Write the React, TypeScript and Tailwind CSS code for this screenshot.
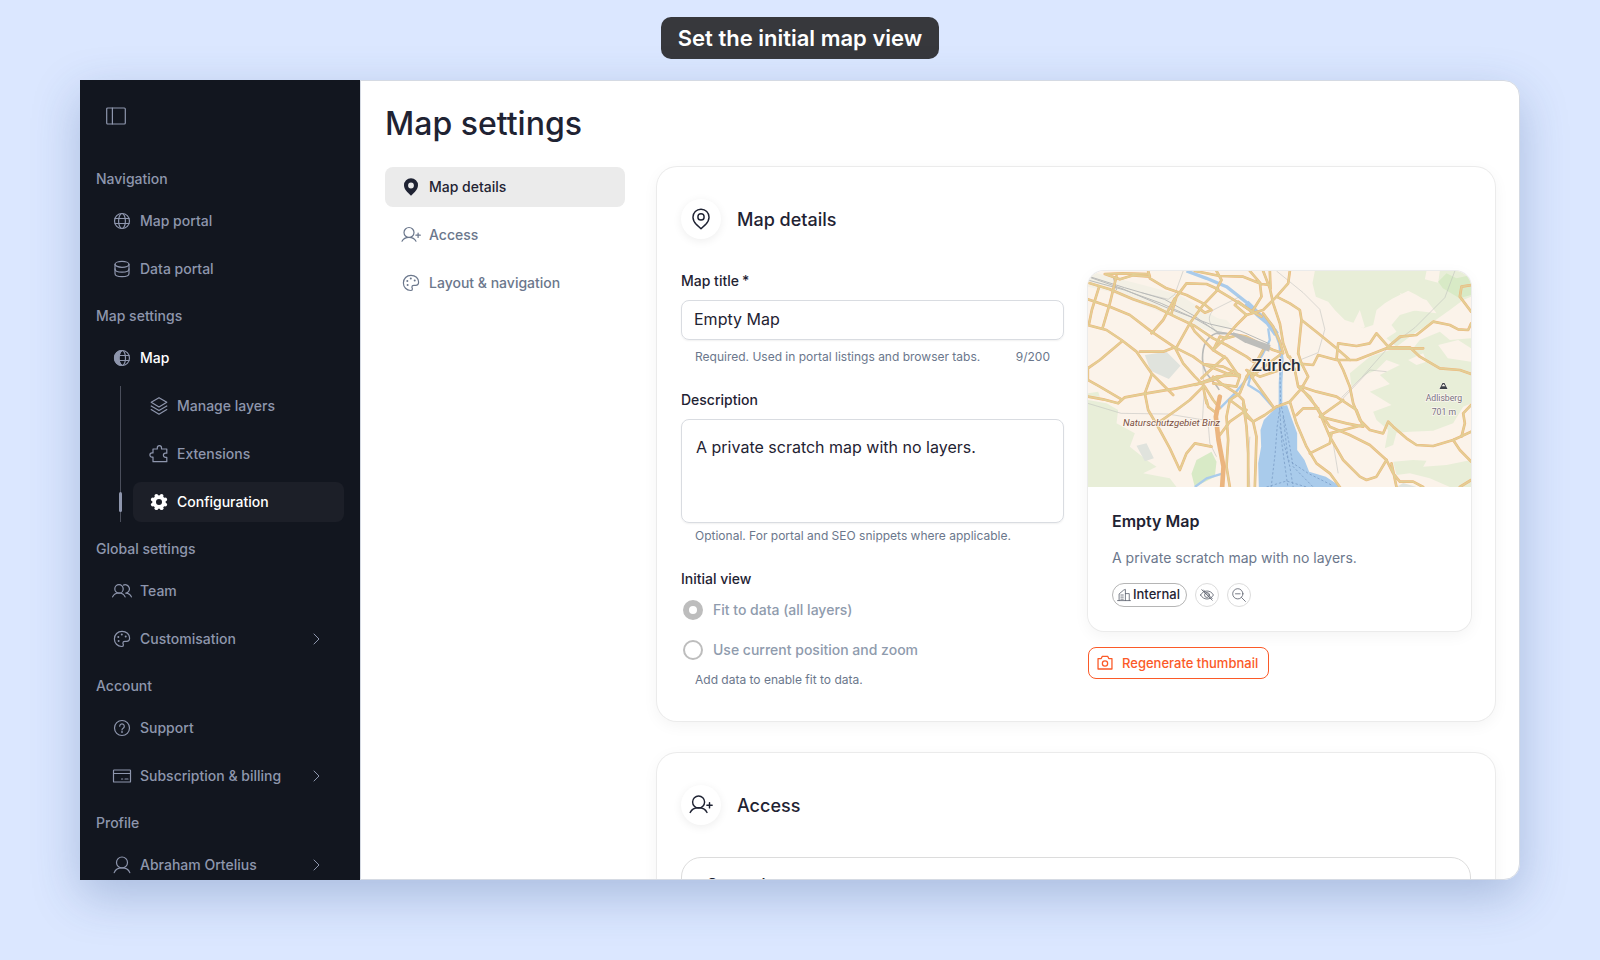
import { useState } from "react"
import type { ReactNode } from "react"

interface IconProps {
  className?: string
}

interface NavItem {
  label: string
  icon: ReactNode
  active?: boolean
  expandable?: boolean
}

function Svg({ className = "size-5", children }: { className?: string; children: ReactNode }) {
  return (
    <svg
      viewBox="0 0 20 20"
      className={`${className} shrink-0`}
      fill="none"
      stroke="currentColor"
      strokeWidth="1.2"
      strokeLinecap="round"
      strokeLinejoin="round"
      aria-hidden="true"
    >
      {children}
    </svg>
  )
}

const SidebarIcon = ({ className }: IconProps) => (
  <Svg className={className}>
    <rect x="0.7" y="2" width="18.6" height="16" rx="1" />
    <path d="M6.4 2v16" />
  </Svg>
)

const GlobeIcon = () => (
  <Svg>
    <circle cx="10" cy="10" r="7.5" />
    <ellipse cx="10" cy="10" rx="3.4" ry="7.5" />
    <path d="M3 7.5h14M3 12.5h14" />
  </Svg>
)

const GlobeHalfIcon = () => (
  <Svg>
    <path d="M10 2.5a7.5 7.5 0 0 0 0 15c-2-1.5-3.3-4.3-3.3-7.5S8 4 10 2.5Z" fill="currentColor" />
    <circle cx="10" cy="10" r="7.5" />
    <ellipse cx="10.3" cy="10" rx="3.2" ry="7.5" />
    <path d="M7 7.5h10M7 12.5h10" />
  </Svg>
)

const DatabaseIcon = () => (
  <Svg>
    <ellipse cx="10" cy="5.3" rx="7" ry="3" />
    <path d="M3 5.3v9.2c0 1.9 3.1 3.2 7 3.2s7-1.3 7-3.2V5.3" />
    <path d="M3 9.9c0 1.9 3.1 3.2 7 3.2s7-1.3 7-3.2" />
  </Svg>
)

const LayersIcon = () => (
  <Svg>
    <path d="m10 1.7 7.8 4.6L10 10.9 2.2 6.3 10 1.7Z" />
    <path d="m2.2 10 7.8 4.6 7.8-4.6M2.2 13.6l7.8 4.6 7.8-4.6" />
  </Svg>
)

const PuzzleIcon = () => (
  <Svg>
    <path d="M4 5h4.3V3.7a2.1 2.1 0 0 1 4.2 0V5h5.3v4.2h-1.3a2.1 2.1 0 0 0 0 4.2h1.3v4.3H4v-4.6H3a2.1 2.1 0 0 1 0-4.2h1V5Z" />
  </Svg>
)

const gearTeeth = [
  [16.2, 12.6],
  [12.6, 16.2],
  [7.4, 16.2],
  [3.8, 12.6],
  [3.8, 7.4],
  [7.4, 3.8],
  [12.6, 3.8],
  [16.2, 7.4],
]

const GearIcon = () => (
  <svg viewBox="0 0 20 20" className="size-5 shrink-0" aria-hidden="true">
    <circle cx="10" cy="10" r="4.9" fill="none" stroke="currentColor" strokeWidth="3.8" />
    {gearTeeth.map(([cx, cy]) => (
      <circle key={`${cx}-${cy}`} cx={cx} cy={cy} r="1.9" fill="currentColor" />
    ))}
  </svg>
)

const UserIcon = () => (
  <Svg>
    <circle cx="10" cy="7.5" r="5.5" />
    <path d="M2.2 17.6c1.2-3 4-4.7 7.8-4.7s6.6 1.7 7.8 4.7" />
  </Svg>
)

const TeamIcon = () => (
  <Svg>
    <circle cx="7" cy="7.9" r="4.2" />
    <path d="M.6 15.9c1-2.5 3.3-3.9 6.4-3.9 2.9 0 5.1 1.4 6.1 3.9" />
    <path d="M11.5 4.1a4.2 4.2 0 1 1 2.3 8c2.7.1 4.7 1.4 5.6 3.8" />
  </Svg>
)

const UserPlusIcon = ({ className }: IconProps) => (
  <Svg className={className}>
    <circle cx="8" cy="7.5" r="5" />
    <path d="M1 16.2c1.2-2.5 3.7-3.9 7-3.9s5.8 1.4 7 3.9" />
    <path d="M14.9 10.2h4.4M17.1 8v4.4" />
  </Svg>
)

const PaletteIcon = () => (
  <Svg>
    <path d="M10 2.3c4.4 0 7.6 3 7.6 6.7 0 2-1 3.3-3 3.3h-1.8c-1.2 0-1.9.6-1.9 1.6 0 .8.5 1.2.5 2 0 1-.8 1.6-1.9 1.6-3.9 0-7.1-3.4-7.1-7.6s3.3-7.6 7.6-7.6Z" />
    <g fill="currentColor" stroke="none">
      <circle cx="9.8" cy="5.6" r="1" />
      <circle cx="13.7" cy="7.4" r="1" />
      <circle cx="6.3" cy="8" r="1" />
      <circle cx="6.6" cy="12" r="1" />
    </g>
  </Svg>
)

const HelpIcon = () => (
  <Svg>
    <circle cx="10" cy="10" r="7.5" />
    <path d="M7.7 8.2a2.3 2.3 0 1 1 3.5 2c-.8.5-1.2.9-1.2 1.7" />
    <circle cx="10" cy="14" r=".9" fill="currentColor" stroke="none" />
  </Svg>
)

const CardIcon = () => (
  <Svg>
    <rect x="1.5" y="4" width="17" height="12" rx=".6" />
    <path d="M1.5 7.5h17M9.5 13h1.2M13 13h3" />
  </Svg>
)

const ChevronIcon = () => (
  <svg viewBox="0 0 24 24" className="size-6 shrink-0" fill="none" stroke="currentColor" strokeLinecap="round" strokeLinejoin="round" aria-hidden="true">
    <path d="m10 7 5 5-5 5" />
  </svg>
)

const PinIcon = ({ className }: IconProps) => (
  <Svg className={className}>
    <path d="M10 1.8a6.6 6.6 0 0 0-6.7 6.7c0 2.5 1.3 4.4 3 6.2L10 18.2l3.7-3.5c1.7-1.8 3-3.7 3-6.2A6.6 6.6 0 0 0 10 1.8Z" />
    <circle cx="10" cy="8.3" r="2.6" />
  </Svg>
)

const PinFilledIcon = () => (
  <svg viewBox="0 0 20 20" className="size-5 shrink-0" fill="currentColor" aria-hidden="true">
    <path
      fillRule="evenodd"
      d="M10 1.2a7 7 0 0 0-7 7c0 2.6 1.3 4.7 3 6.5l4 4.1 4-4.1c1.7-1.8 3-3.9 3-6.5a7 7 0 0 0-7-7Zm0 4.4a2.9 2.9 0 1 1 0 5.8 2.9 2.9 0 0 1 0-5.8Z"
    />
  </svg>
)

const BuildingIcon = () => (
  <Svg className="size-3.5">
    <path d="M3 18V8.5L9.5 3 12 2v16M.8 18h18.4M12 8h5.5v10M5.5 10h3.5M5.5 13h3.5M5.5 16h3.5" />
  </Svg>
)

const EyeOffIcon = () => (
  <Svg className="size-3.5">
    <path d="M.8 10c2-3.7 5.4-5.7 9.2-5.7s7.2 2 9.2 5.7c-2 3.7-5.4 5.7-9.2 5.7S2.8 13.7.8 10Z" />
    <circle cx="10" cy="10" r="3.5" />
    <path d="m2.5 2.5 15 15M5 2.8l12.5 12.5" />
  </Svg>
)

const ZoomOutIcon = () => (
  <Svg className="size-3.5">
    <circle cx="8.3" cy="8.3" r="7.3" />
    <path d="m13.6 13.6 5.6 5.6M5 8.3h6.6" />
  </Svg>
)

const CameraIcon = () => (
  <Svg className="size-4">
    <path strokeWidth="1.6" d="M1.3 4.5h4l1.2-2.7h7l1.2 2.7h4v13H1.3v-13Z" />
    <circle strokeWidth="1.6" cx="10" cy="10.7" r="3.3" />
  </Svg>
)

const roads = [
  "M24 68 90 88 160 118 230 142 290 172 345 198 400 235 440 255 500 290 520 305",
  "M75 42 120 58 160 46 210 50 205 33M75 42 130 40 205 42",
  "M110 48 90 130 68 205M58 80 36 150 28 190",
  "M24 118 90 140 150 165 215 215 285 262 340 290 370 312 430 320 480 345",
  "M24 195 80 210 125 240 170 275 215 340 250 375 280 405",
  "M210 55 260 85 320 105 370 130 395 150 375 158 350 140",
  "M320 70 290 110 275 160M320 70 380 72 415 88 370 135 330 190 290 262",
  "M285 115 250 180 215 220M285 262 250 275 180 275",
  "M125 245 60 300 24 325 24 360 60 380 125 418",
  "M24 410 70 418 115 430 135 412 200 400 290 385 360 370 410 350 470 345",
  "M215 345 195 400 205 450 240 510 270 565 300 630 320 580 345 550 395 560",
  "M240 485 290 450 330 420 370 380M285 262 310 310 345 350 375 380 400 420 420 445",
  "M330 190 345 215 400 270 440 295 475 345M400 270 435 235 470 195 500 165",
  "M345 375 400 360 460 335M365 355 435 290M370 312 440 340 480 350 470 380 400 370",
  "M380 420 385 440 410 460M370 380 380 430",
  "M410 33 425 60 410 88 455 115 510 150 545 170",
  "M345 33 420 48 490 50 545 72 570 75 M510 33 540 68 545 110 520 150",
  "M500 165 465 135 475 125 515 155M500 165 550 150 590 110 625 70 630 33",
  "M550 33 570 85 580 130 600 190 610 250 625 290",
  "M570 33 572 85M590 110 630 130 660 150 665 180 655 280",
  "M550 160 580 200 600 245 610 280 580 270 550 255",
  "M665 180 715 220 770 265 810 300M625 290 650 310 700 315 715 285 770 300 830 300 920 265 1030 265",
  "M770 298 775 250 830 258 870 250 890 220 925 260 960 230 1010 225 1060 185 1110 195 1135 208 1165 210 1174 190",
  "M1174 75 1145 80 1140 110 1174 155",
  "M925 262 990 262 1020 290 1080 325 1140 330 1174 342",
  "M775 300 790 330 810 380 820 430 840 480 870 510 910 520 925 485 940 500 980 535 1010 555 1060 558 1120 540 1174 515",
  "M1120 540 1140 570 1174 605M1145 530 1155 490 1150 460 1174 435",
  "M655 280 665 310 685 350 665 385 630 425 590 440",
  "M630 290 645 330 655 380 690 410 720 460 750 530 790 600 840 650 860 660 890 650 920 600 870 555 810 525 750 500 710 440 660 380",
  "M665 380 710 395 770 410 830 450 850 500 800 490 720 470M720 470 790 420M750 520 850 495",
  "M650 465 670 445 715 445M690 580 750 550 755 520",
  "M920 600 940 640 960 665 1000 665 1030 681M935 610 950 681",
  "M630 425 650 490 680 560 710 610 750 640 780 681",
  "M590 440 555 465 520 485 500 470 490 420 470 400 430 375 400 350",
  "M520 350 500 330 540 350 600 330M540 250 500 230 475 225 440 235 420 230 400 270",
  "M515 350 540 385 580 440M500 350 480 400 450 420 440 470 445 540 440 620 450 681",
  "M550 270 530 305 500 350M600 285 540 330 515 350",
  "M490 430 500 500 505 580 505 681M520 485 530 530 528 590 525 681",
  "M450 420 490 450 520 485M420 525 450 485 500 450M1140 681 1174 660",
]

function MapPreview() {
  return (
    <svg viewBox="24 33 1150 648" preserveAspectRatio="xMidYMid slice" className="block aspect-[383/216] w-full" role="img" aria-label="Zürich">
      <rect x="24" y="33" width="1150" height="648" fill="#fbf3ea" />
      <g fill="#f3f0e5">
        <path d="M24 33 190 75 300 105 380 155 440 190 420 225 340 195 240 155 90 95 24 80Z" />
        <path d="M330 160 440 180 460 200 400 215Z" />
      </g>
      <g fill="#e8eed8">
        <path d="M705 33 698 70 708 110 745 125 765 150 795 180 825 190 850 205 880 195 890 150 915 130 940 115 985 92 1010 105 1035 120 1010 150 960 165 935 195 950 215 920 235 950 260 1010 215 1060 185 1110 150 1150 120 1174 110V33Z" />
        <path d="M1020 240 1080 215 1110 240 1174 235V430L1150 440 1120 490 1060 512 990 515 950 518 940 555 915 565 925 510 890 480 880 455 935 435 870 395 930 372 900 345 960 315 920 300 890 330 855 345 815 380 810 340 870 290 930 270 1000 265Z" />
        <path d="M24 420 80 430 115 450 110 490 165 520 150 560 200 600 230 620 190 640 270 655 290 681H24Z" />
        <path d="M940 605 1000 600 1040 602 1030 620 1100 615 1174 600V681H1110L1050 655 990 640 950 645Z" />
        <path d="M24 400 55 395 60 410 24 410Z" />
      </g>
      <g fill="#fbf3ea">
        <path d="m985 300 45-20 10 25-30 10ZM1075 255l60-15 39 25v40l-70-10ZM850 205l-30-15 20-40 15 50Z" />
        <path d="M1040 33h40l-5 35-40-10ZM960 100l80 20 30 40-80-10Z" />
      </g>
      <g fill="#d8eac6">
        <path d="m1075 65 25-25 30 15 44-10v60l-35 10-50-30Z" />
        <path d="m350 600 45-25 15 30-5 45-60 31-10-40Z" />
      </g>
      <g fill="#e0e3dd">
        <path d="m195 285 65-10 42 42-35 40-55-25ZM170 557l30-7 22 45-27 9ZM950 681l20-12 40 12Z" />
      </g>

      {/* Lake and rivers */}
      <path fill="#a9cbeb" d="m592 438 30-2 14 40 16 44v50l22 30 14 35 50 15 47 31H537l-2-71 9-50-2-50 10-30 26-26Z" />
      <g fill="none" stroke="#a9cbeb" strokeLinejoin="round">
        <path strokeWidth="10" d="m320 33 60 22 60 25 70 55" />
        <path strokeWidth="17" d="m500 128 35 35 30 25 25 35" />
        <path strokeWidth="11" d="m585 210 15 40 6 50-4 70v75" />
        <path strokeWidth="7" d="m565 205 5 35-20 40-35 60-10 35 35 22 40 45M515 340l-50 60-45 45M430 640l-50 15-35 26" />
      </g>
      <g fill="none" stroke="#7c9fc8" strokeWidth="2.5" strokeDasharray="7 6">
        <path d="m600 300 2 130-10 70-6 80-12 101M600 450l6 100 18 131M605 440l25 120 10 60 60 61M610 470l15 130 60 40 70 35M600 500l30 120 10 61M560 681l60-18 60 18" />
      </g>

      {/* Railways */}
      <g fill="none" stroke="#b9bab8" strokeWidth="3">
        <path d="m24 48 110 35 120 35 90 50 70 50 60 5 95 40M24 60l110 30 110 40 100 45 70 40 60 10M30 52l100 35 140 60 120 45 90 20 90 40M100 50l10 40" />
        <path strokeWidth="5" d="M570 265 460 222l-50-2c-30 10-42 40-42 75 0 50 35 65 50 95" />
        <path strokeWidth="1.5" d="m310 33-25 70-20 15-80-20M480 110l-80 40c-25 30-5 50 20 75M590 33l80 65 50 50 15 60-20 70-50 20M1125 33l-30 80-90 90-80 60-80 90-60 60M920 335l-50-5-85 90M24 430l100 30 140 2 120 20M368 300l5 90-5 90M385 490l5 60 20 40M510 530l-5 70 5 81M760 550l15 90" />
      </g>

      {/* Roads: casing first, then the lighter core */}
      <g fill="none" strokeLinejoin="round" strokeLinecap="round">
        {roads.map((d) => (
          <path key={d} d={d} stroke="#efb67c" strokeWidth="8" />
        ))}
        {roads.map((d) => (
          <path key={d} d={d} stroke="#e2cf95" strokeWidth="5" />
        ))}
        <path stroke="#ebb57f" strokeWidth="14" d="m420 410-12 60 8 70 15 80-4 61" />
      </g>
      <path fill="#bdbdba" d="m460 217 112 38-4 20-75-28-36-22Z" />

      <g fontFamily="Roboto, sans-serif" stroke="#fdf7f0" paintOrder="stroke">
        <text x="589" y="333" textAnchor="middle" fontSize="52" fontWeight="500" fill="#2b303a" strokeWidth="5">
          Zürich
        </text>
        <text x="275" y="499" textAnchor="middle" fontSize="29" fontStyle="italic" fill="#7b4f3f" strokeWidth="4">
          Naturschutzgebiet Binz
        </text>
        <path fill="#3c4048" strokeWidth="3" d="m1079 387 9-18h6l9 18Z" />
        <path stroke="none" fill="#fdf7f0" d="m1085 379 6-7 6 7Z" />
        <text x="1092" y="422" textAnchor="middle" fontSize="26" fill="#74717f" strokeWidth="4">
          Adlisberg
        </text>
        <text x="1092" y="464" textAnchor="middle" fontSize="26" fill="#74717f" strokeWidth="4">
          701 m
        </text>
      </g>
    </svg>
  )
}

function SidebarLink({ label, icon, active, expandable }: NavItem) {
  return (
    <a href="#" className={`flex h-10 items-center gap-2 rounded-lg px-4 text-sm font-medium ${active ? "text-white" : "text-[#8e96ad]"}`}>
      <span className="text-[#8e96ad]">{icon}</span>
      <span className="flex-1">{label}</span>
      {expandable && <ChevronIcon />}
    </a>
  )
}

function SidebarSection({ title, items, children }: { title: string; items: NavItem[]; children?: ReactNode }) {
  return (
    <section>
      <h2 className="pt-[17px] pb-3 text-sm leading-5 font-medium text-[#8e96ad]">{title}</h2>
      <div className="flex flex-col gap-2">
        {items.map((item) => (
          <SidebarLink key={item.label} {...item} />
        ))}
        {children}
      </div>
    </section>
  )
}

const mapLinks: NavItem[] = [
  { label: "Manage layers", icon: <LayersIcon /> },
  { label: "Extensions", icon: <PuzzleIcon /> },
  { label: "Configuration", icon: <GearIcon />, active: true },
]

function Sidebar() {
  return (
    <aside className="w-70 shrink-0 overflow-hidden bg-[#12161f] p-4">
      <button type="button" aria-label="Toggle sidebar" className="mb-4 flex size-10 items-center justify-center text-[#8e96ad]">
        <SidebarIcon />
      </button>
      <nav>
        <SidebarSection
          title="Navigation"
          items={[
            { label: "Map portal", icon: <GlobeIcon /> },
            { label: "Data portal", icon: <DatabaseIcon /> },
          ]}
        />
        <SidebarSection title="Map settings" items={[{ label: "Map", icon: <GlobeHalfIcon />, active: true }]}>
          <div className="ml-6 flex flex-col gap-2 border-l border-[#4a4e5b]">
            {mapLinks.map((link) => (
              <div key={link.label} className="relative pl-3">
                {link.active && <span className="absolute top-[10px] -left-[2px] h-5 w-[3px] rounded-full bg-[#8e96ad]" />}
                <a
                  href="#"
                  className={`flex h-10 items-center gap-2 rounded-lg px-4 text-sm font-medium ${link.active ? "bg-[#1c1f28] text-white" : "text-[#8e96ad]"}`}
                >
                  {link.icon}
                  {link.label}
                </a>
              </div>
            ))}
          </div>
        </SidebarSection>
        <SidebarSection
          title="Global settings"
          items={[
            { label: "Team", icon: <TeamIcon /> },
            { label: "Customisation", icon: <PaletteIcon />, expandable: true },
          ]}
        />
        <SidebarSection
          title="Account"
          items={[
            { label: "Support", icon: <HelpIcon /> },
            { label: "Subscription & billing", icon: <CardIcon />, expandable: true },
          ]}
        />
        <SidebarSection title="Profile" items={[{ label: "Abraham Ortelius", icon: <UserIcon />, expandable: true }]} />
      </nav>
    </aside>
  )
}

function SettingsCard({ icon, title, children }: { icon: ReactNode; title: string; children: ReactNode }) {
  return (
    <section className="rounded-[20px] bg-white px-6 py-8 shadow-[0_0_0_1px_#ebebeb,0_4px_16px_rgba(0,0,0,0.05)]">
      <div className="mb-8 flex items-center gap-4">
        <span className="flex size-10 items-center justify-center rounded-full bg-white shadow-[0_2px_10px_rgba(0,0,0,0.07)]">{icon}</span>
        <h2 className="pt-0.5 text-lg font-medium">{title}</h2>
      </div>
      {children}
    </section>
  )
}

export default function App() {
  const [title, setTitle] = useState("Empty Map")
  const [description, setDescription] = useState("A private scratch map with no layers.")

  return (
    <div className="flex h-screen flex-col bg-[#dbe7ff] font-['Inter',sans-serif] text-[#1f2333]">
      <header className="flex h-20 shrink-0 items-start justify-center pt-[17px]">
        <div className="flex h-[42px] items-center rounded-[10px] bg-[#37383c] px-[17px] text-[22px] font-semibold text-white">Set the initial map view</div>
      </header>

      <div className="mx-20 mb-20 flex min-h-0 flex-1 rounded-r-2xl shadow-[0_16px_48px_rgba(40,75,135,0.28)]">
        <Sidebar />

        <main className="min-w-0 flex-1 overflow-hidden rounded-r-2xl border border-[#d5dae3] bg-white px-6 pt-5">
          <h1 className="mb-5 text-[32px] leading-[46px] font-medium">Map settings</h1>

          <div className="flex items-start gap-8">
            <nav className="flex w-60 shrink-0 flex-col gap-2 text-sm font-medium text-[#6b778c]">
              <a href="#" className="flex h-10 items-center gap-2 rounded-lg bg-[#ebebeb] px-4 text-[#1f2333]">
                <PinFilledIcon />
                Map details
              </a>
              <a href="#" className="flex h-10 items-center gap-2 rounded-lg px-4">
                <UserPlusIcon />
                Access
              </a>
              <a href="#" className="flex h-10 items-center gap-2 rounded-lg px-4">
                <PaletteIcon />
                Layout & navigation
              </a>
            </nav>

            <div className="flex min-w-0 flex-1 flex-col gap-8">
              <SettingsCard icon={<PinIcon className="size-6" />} title="Map details">
                <div className="grid grid-cols-2 items-start gap-6">
                  <form className="flex flex-col gap-6">
                    <div>
                      <label htmlFor="title" className="mb-[9px] block text-sm leading-5 font-medium">
                        Map title<span className="ml-[3px]">*</span>
                      </label>
                      <input
                        id="title"
                        value={title}
                        maxLength={200}
                        onChange={(e) => setTitle(e.target.value)}
                        className="block h-10 w-full rounded-lg border border-[#d9dce1] px-3 pb-0.5 text-base shadow-[0_1px_2px_rgba(0,0,0,0.06)] outline-none"
                      />
                      <div className="mt-2 flex justify-between px-[14px] text-xs leading-[18px] text-[#6b778c]">
                        <span>Required. Used in portal listings and browser tabs.</span>
                        <span>{title.length}/200</span>
                      </div>
                    </div>

                    <div>
                      <label htmlFor="description" className="mb-[9px] block text-sm leading-5 font-medium">
                        Description
                      </label>
                      <textarea
                        id="description"
                        value={description}
                        onChange={(e) => setDescription(e.target.value)}
                        className="block h-26 w-full resize-none rounded-lg border border-[#d9dce1] px-[14px] py-[15px] text-base shadow-[0_1px_2px_rgba(0,0,0,0.06)] outline-none"
                      />
                      <p className="mt-1 px-[14px] text-xs leading-[18px] text-[#6b778c]">Optional. For portal and SEO snippets where applicable.</p>
                    </div>

                    <fieldset>
                      <legend className="pb-px text-sm leading-5 font-medium">Initial view</legend>
                      <label className="flex h-10 items-center gap-[10px] pl-[2px] text-sm font-medium text-[#8f9bad]">
                        <input
                          type="radio"
                          name="view"
                          disabled
                          defaultChecked
                          className="size-5 appearance-none rounded-full border-2 border-[#bdbdbd] checked:border-6"
                        />
                        Fit to data (all layers)
                      </label>
                      <label className="flex h-10 items-center gap-[10px] pl-[2px] text-sm font-medium text-[#8f9bad]">
                        <input
                          type="radio"
                          name="view"
                          disabled
                          className="size-5 appearance-none rounded-full border-2 border-[#bdbdbd] checked:border-6"
                        />
                        Use current position and zoom
                      </label>
                      <p className="mt-px px-[14px] text-xs leading-[18px] text-[#6b778c]">Add data to enable fit to data.</p>
                    </fieldset>
                  </form>

                  <div className="flex flex-col items-start gap-4">
                    <article className="w-full overflow-hidden rounded-2xl bg-white shadow-[0_0_0_1px_#ebebeb,0_4px_16px_rgba(0,0,0,0.05)]">
                      <MapPreview />
                      <div className="p-6">
                        <h3 className="text-base leading-5 font-semibold">{title}</h3>
                        <p className="mt-4 text-sm leading-[22px] text-[#6b778c]">{description}</p>
                        <div className="mt-[14px] flex items-center gap-2 text-[#5f6470]">
                          <span className="flex h-6 items-center gap-0.5 rounded-full border border-[#b5b5b5] pr-[6px] pl-1">
                            <BuildingIcon />
                            <span className="text-[13px] font-medium text-[#1f2333]">Internal</span>
                          </span>
                          <span className="flex size-6 items-center justify-center rounded-full border border-[#dcdcdc]">
                            <EyeOffIcon />
                          </span>
                          <span className="flex size-6 items-center justify-center rounded-full border border-[#dcdcdc]">
                            <ZoomOutIcon />
                          </span>
                        </div>
                      </div>
                    </article>
                    <button
                      type="button"
                      className="flex h-8 items-center gap-[9px] rounded-lg border border-[#fb5a28] pr-[10px] pl-2 text-[13px] font-medium text-[#fb5a28]"
                    >
                      <CameraIcon />
                      <span className="pt-0.5">Regenerate thumbnail</span>
                    </button>
                  </div>
                </div>
              </SettingsCard>

              <SettingsCard icon={<UserPlusIcon className="size-6" />} title="Access">
                <div className="rounded-[20px] border border-[#dcdcdc] px-6 py-[14px]">
                  <h3 className="text-base font-medium">General access</h3>
                </div>
              </SettingsCard>
            </div>
          </div>
        </main>
      </div>
    </div>
  )
}
